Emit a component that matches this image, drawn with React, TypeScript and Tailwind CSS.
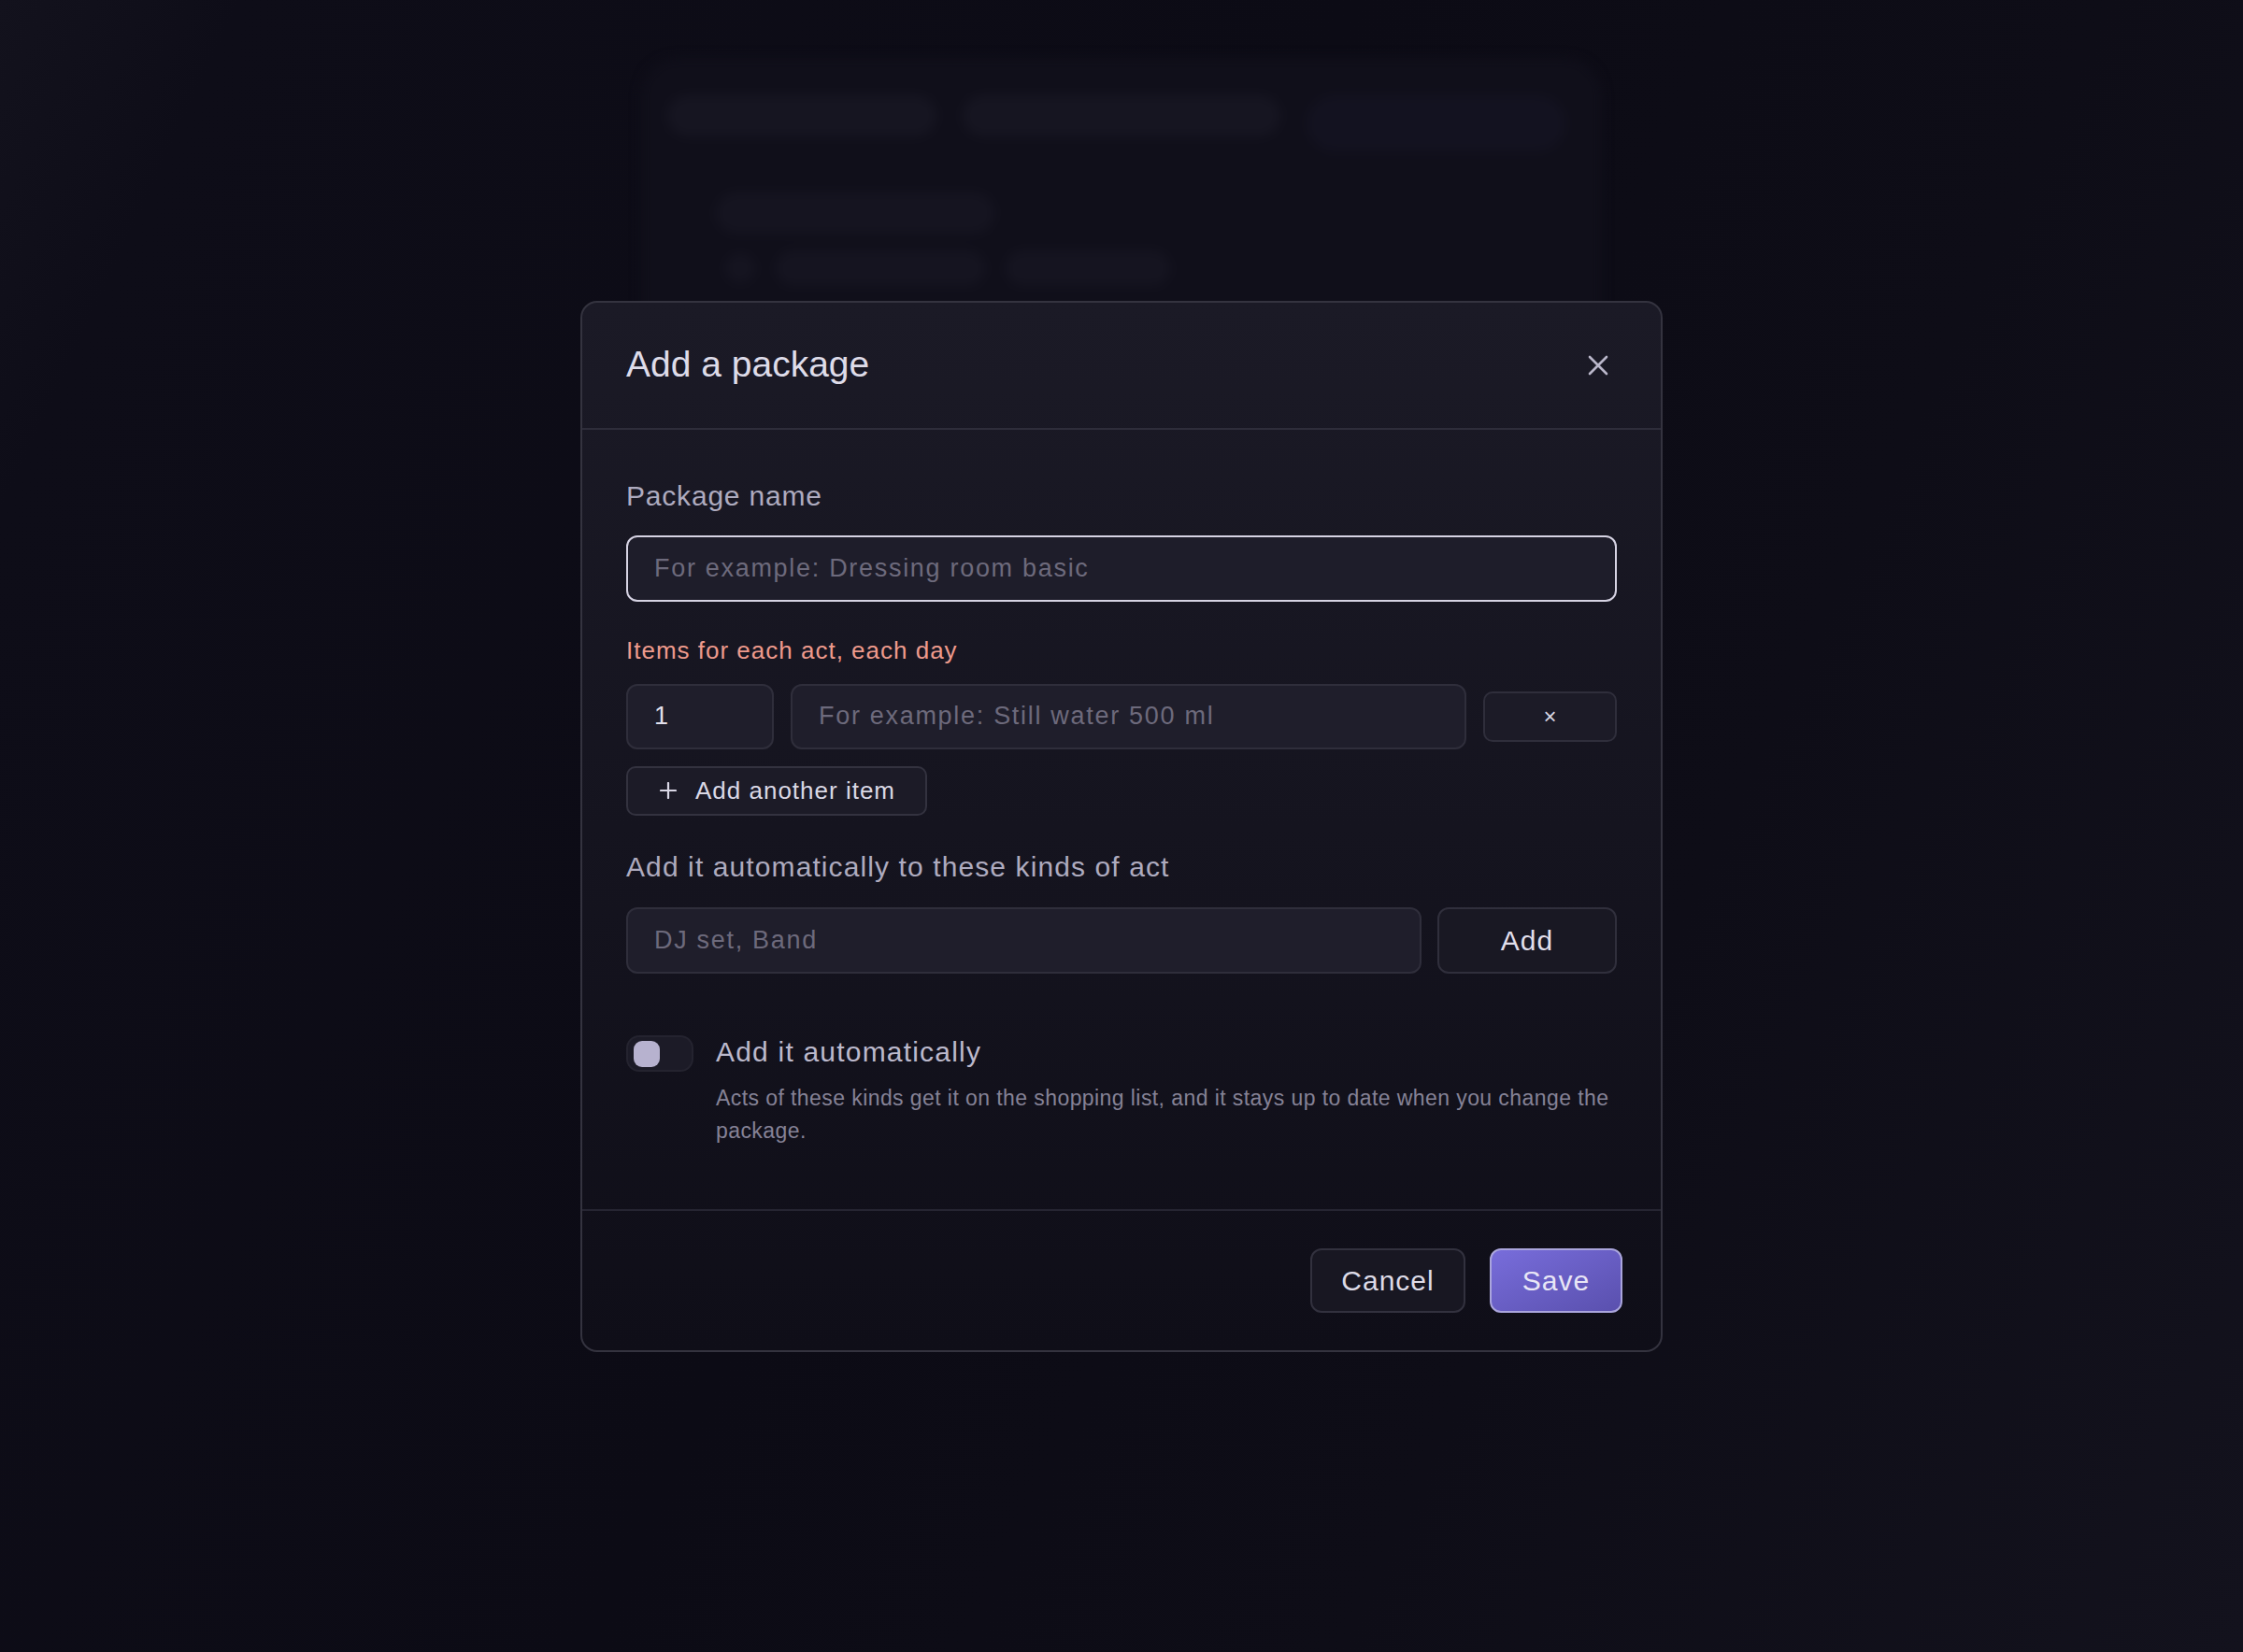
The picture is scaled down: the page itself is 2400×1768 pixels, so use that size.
import { useState } from 'react'

const CloseIcon = () => (
  <svg width="22" height="22" viewBox="0 0 22 22" fill="none">
    <path d="M2 2L20 20M20 2L2 20" stroke="#b9b6c9" strokeWidth="2.6" strokeLinecap="round" />
  </svg>
)

const PlusIcon = () => (
  <svg width="18" height="18" viewBox="0 0 18 18" fill="none">
    <path d="M9 1V17M1 9H17" stroke="#d9d7e5" strokeWidth="2.2" strokeLinecap="round" />
  </svg>
)

// the blurred page behind the dialog
const Backdrop = () => (
  <div className="mx-auto mt-[62px] w-[1028px] h-[1100px] rounded-[40px] bg-[#100f1a] blur-[6px] px-[28px] pt-[40px]">
    <div className="flex gap-[28px]">
      <div className="h-[44px] w-[288px] rounded-full bg-[#161521]" />
      <div className="h-[44px] w-[340px] rounded-full bg-[#161521]" />
      <div className="h-[60px] w-[277px] rounded-[30px] bg-[#131220]" />
    </div>
    <div className="mt-[44px] ml-[52px] h-[44px] w-[298px] rounded-full bg-[#151420]" />
    <div className="mt-[18px] ml-[62px] flex items-center gap-[22px]">
      <div className="h-[32px] w-[32px] rounded-full bg-[#151420]" />
      <div className="h-[38px] w-[224px] rounded-full bg-[#151420]" />
      <div className="h-[38px] w-[176px] rounded-full bg-[#151420]" />
    </div>
  </div>
)

export default function App() {
  const [auto, setAuto] = useState(false)

  return (
    <div className="relative min-h-[1768px] w-full overflow-hidden bg-[linear-gradient(115deg,#13121d_0%,#0e0d18_8%,#0c0b15_45%,#0e0d17_70%,#13121d_100%)] font-['Liberation_Sans',Arial,sans-serif]">
      <Backdrop />

      <div className="absolute inset-0 flex items-center justify-center">
        <div className="w-[1158px] rounded-[18px] border-2 border-[#34333f] bg-gradient-to-b from-[#1b1a26] via-[#15141f] to-[#0f0e18] overflow-hidden">
          {/* header */}
          <div className="h-[136px] flex items-center justify-between px-[47px] border-b-2 border-[#2e2d3a]">
            <h2 className="text-[39px] leading-[46px] -mt-[2px] text-[#dedce9]">Add a package</h2>
            <button className="w-10 h-10 flex items-center justify-center">
              <CloseIcon />
            </button>
          </div>

          {/* body */}
          <div className="px-[47px] pt-[53px] pb-[66px]">
            <label className="block text-[30px] leading-[36px] tracking-[0.8px] text-[#aeabbf]">
              Package name
            </label>
            <input
              className="mt-[24px] w-full h-[71px] rounded-[12px] border-2 border-[#d6d3e3] bg-[#1e1d2a] px-[28px] text-[27px] tracking-[1.7px] text-[#e0deea] placeholder:text-[#6d6a7c] outline-none"
              placeholder="For example: Dressing room basic"
            />

            <p className="mt-[36px] text-[26px] leading-[32px] tracking-[1px] text-[#ee9a8c]">
              Items for each act, each day
            </p>
            <div className="mt-[20px] flex items-center gap-[18px] h-[70px]">
              <input
                defaultValue="1"
                className="w-[158px] h-[70px] rounded-[12px] border-2 border-[#2f2e3b] bg-[#1f1e2b] px-[28px] text-[27px] tracking-[1.7px] text-[#e2e0ec] outline-none"
              />
              <input
                className="flex-1 h-[70px] rounded-[12px] border-2 border-[#2f2e3b] bg-[#1f1e2b] px-[28px] text-[27px] tracking-[1.7px] text-[#e0deea] placeholder:text-[#6d6a7c] outline-none"
                placeholder="For example: Still water 500 ml"
              />
              <button className="w-[143px] h-[54px] rounded-[10px] border-2 border-[#2f2e3b] bg-[#1c1b27] text-[24px] leading-none text-[#d8d6e3]">
                ×
              </button>
            </div>
            <button className="mt-[18px] h-[53px] flex items-center gap-[20px] pl-[34px] pr-[32px] rounded-[10px] border-2 border-[#33323f] bg-[#1c1b27] text-[26px] tracking-[1px] text-[#dad8e5]">
              <PlusIcon />
              Add another item
            </button>

            <p className="mt-[37px] text-[30px] leading-[36px] tracking-[1.1px] text-[#aeabbf]">
              Add it automatically to these kinds of act
            </p>
            <div className="mt-[25px] flex gap-[17px]">
              <input
                className="flex-1 h-[71px] rounded-[12px] border-2 border-[#2f2e3b] bg-[#1f1e2b] px-[28px] text-[27px] tracking-[1.7px] text-[#e0deea] placeholder:text-[#6d6a7c] outline-none"
                placeholder="DJ set, Band"
              />
              <button className="w-[192px] h-[71px] rounded-[12px] border-2 border-[#302f3c] bg-[#191823] text-[30px] tracking-[1px] text-[#e1dfeb]">
                Add
              </button>
            </div>

            <div className="mt-[66px] flex gap-[24px]">
              <button
                onClick={() => setAuto(!auto)}
                className="relative shrink-0 w-[72px] h-[39px] rounded-[14px] border-2 border-[#24232f] bg-[#1c1b27]"
              >
                <span className="absolute left-[6px] top-[4px] w-[28px] h-[28px] rounded-[9px] bg-[#b7b2cf]" />
              </button>
              <div className="flex-1">
                <p className="text-[30px] leading-[36px] tracking-[1.2px] text-[#bcb9cc]">Add it automatically</p>
                <p className="mt-[14px] text-[23px] leading-[35px] tracking-[0.42px] text-[#858296]">
                  Acts of these kinds get it on the shopping list, and it stays up to date when you change the
                  package.
                </p>
              </div>
            </div>
          </div>

          {/* footer */}
          <div className="h-[151px] flex items-center justify-end gap-[26px] pl-[47px] pr-[41px] border-t-2 border-[#262532]">
            <button className="w-[166px] h-[69px] rounded-[12px] border-2 border-[#32313e] bg-[#181722] text-[30px] tracking-[1px] text-[#dddbe7]">
              Cancel
            </button>
            <button className="w-[142px] h-[69px] rounded-[12px] border-2 border-[#aaa5dc] bg-gradient-to-br from-[#786ddb] to-[#5a50ae] text-[30px] tracking-[1px] text-[#e8e6f6]">
              Save
            </button>
          </div>
        </div>
      </div>
    </div>
  )
}
